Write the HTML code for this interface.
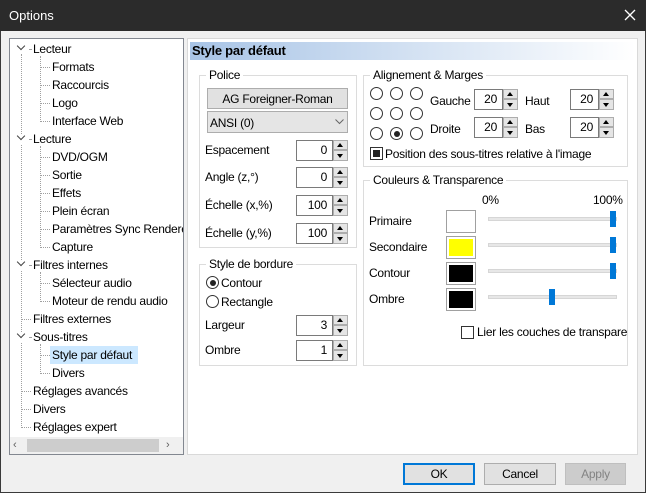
<!DOCTYPE html>
<html><head><meta charset="utf-8"><style>
*{box-sizing:border-box;margin:0;padding:0}
body{width:646px;height:493px;background:#f0f0f0;font-family:"Liberation Sans",sans-serif;font-size:12px;letter-spacing:-0.25px;color:#000;position:relative;overflow:hidden}
.a{position:absolute}
.t{position:absolute;white-space:nowrap;line-height:16px;height:16px}
.grp{position:absolute;border:1px solid #dcdcdc}
.gl{position:absolute;top:-9px;left:6px;background:#fff;padding:0 3px;line-height:16px;white-space:nowrap}
.spin{position:absolute;width:52px;height:21px}
.spin .b{position:absolute;left:0;top:0;width:37px;height:21px;border:1px solid #7a7a7a;background:#fff;text-align:right;padding-right:5px;line-height:19px}
.spin .u,.spin .d{position:absolute;left:37px;width:15px;height:10px;background:#e5e5e5;border:1px solid #adadad}
.spin .u{top:0}.spin .d{top:10px;height:11px}
.spin .u:after{content:"";position:absolute;left:3px;top:2px;border-left:3.5px solid transparent;border-right:3.5px solid transparent;border-bottom:4px solid #000}
.spin .d:after{content:"";position:absolute;left:3px;top:3px;border-left:3.5px solid transparent;border-right:3.5px solid transparent;border-top:4px solid #000}
.rad{position:absolute;width:13px;height:13px;border:1px solid #333;border-radius:50%;background:#fff}
.rad.on:after{content:"";position:absolute;left:2.5px;top:2.5px;width:6px;height:6px;border-radius:50%;background:#222}
.hl{position:absolute;border-top:1px dotted #a0a0a0;height:0}
.vl{position:absolute;border-left:1px dotted #a0a0a0;width:0}
.chev{position:absolute;width:6px;height:6px;border-right:1.5px solid #444;border-bottom:1.5px solid #444;transform:rotate(45deg)}
.sw{position:absolute;width:30px;height:23px;border:1px solid #a0a0a0;padding:2px}
.sw i{display:block;width:100%;height:100%}
.tr{position:absolute;left:488px;width:129px;height:4px;background:#e7e7e7;border:1px solid #d6d6d6}
.th{position:absolute;width:6px;height:16px;background:#0078d7}
.btn{position:absolute;height:22px;border:1px solid #adadad;background:#e1e1e1;text-align:center;line-height:20px}
</style></head><body>
<div class="a" style="left:0;top:0;width:646px;height:31px;background:#2b2b2b"></div>
<div class="t" style="left:9px;top:8px;color:#fff;font-size:13px;letter-spacing:0">Options</div>
<svg class="a" style="left:624px;top:9px" width="12" height="12"><path d="M1 1L11 11M11 1L1 11" stroke="#fff" stroke-width="1.3"/></svg>
<div class="a" style="left:0;top:31px;width:1px;height:462px;background:#3a3a3a"></div>
<div class="a" style="right:0;top:31px;width:1px;height:462px;background:#3a3a3a"></div>
<div class="a" style="left:0;bottom:0;width:646px;height:1px;background:#3a3a3a"></div>

<!-- tree -->
<div class="a" style="left:9px;top:38px;width:175px;height:417px;background:#fff;border:1px solid #828790"></div>
<div class="vl" style="left:21px;top:54px;height:374px"></div>
<div class="vl" style="left:40px;top:56px;height:66px"></div>
<div class="vl" style="left:40px;top:146px;height:102px"></div>
<div class="vl" style="left:40px;top:272px;height:30px"></div>
<div class="vl" style="left:40px;top:344px;height:30px"></div>
<div class="a" style="left:16px;top:44px;width:12px;height:10px;background:#fff"></div>
<div class="chev" style="left:18px;top:43px"></div>
<div class="a" style="left:16px;top:134px;width:12px;height:10px;background:#fff"></div>
<div class="chev" style="left:18px;top:133px"></div>
<div class="a" style="left:16px;top:260px;width:12px;height:10px;background:#fff"></div>
<div class="chev" style="left:18px;top:259px"></div>
<div class="a" style="left:16px;top:332px;width:12px;height:10px;background:#fff"></div>
<div class="chev" style="left:18px;top:331px"></div>
<div class="hl" style="left:29px;top:49px;width:2px"></div>
<div class="hl" style="left:29px;top:139px;width:2px"></div>
<div class="hl" style="left:29px;top:265px;width:2px"></div>
<div class="hl" style="left:29px;top:337px;width:2px"></div>
<div class="hl" style="left:22px;top:319px;width:9px"></div>
<div class="hl" style="left:22px;top:391px;width:9px"></div>
<div class="hl" style="left:22px;top:409px;width:9px"></div>
<div class="hl" style="left:22px;top:427px;width:9px"></div>
<div class="hl" style="left:41px;top:67px;width:9px"></div>
<div class="hl" style="left:41px;top:85px;width:9px"></div>
<div class="hl" style="left:41px;top:103px;width:9px"></div>
<div class="hl" style="left:41px;top:121px;width:9px"></div>
<div class="hl" style="left:41px;top:157px;width:9px"></div>
<div class="hl" style="left:41px;top:175px;width:9px"></div>
<div class="hl" style="left:41px;top:193px;width:9px"></div>
<div class="hl" style="left:41px;top:211px;width:9px"></div>
<div class="hl" style="left:41px;top:229px;width:9px"></div>
<div class="hl" style="left:41px;top:247px;width:9px"></div>
<div class="hl" style="left:41px;top:283px;width:9px"></div>
<div class="hl" style="left:41px;top:301px;width:9px"></div>
<div class="hl" style="left:41px;top:355px;width:9px"></div>
<div class="hl" style="left:41px;top:373px;width:9px"></div>
<div class="a" style="left:50px;top:346px;width:88px;height:18px;background:#cce8ff"></div>
<div class="t" style="left:33px;top:41px">Lecteur</div>
<div class="t" style="left:52px;top:59px">Formats</div>
<div class="t" style="left:52px;top:77px">Raccourcis</div>
<div class="t" style="left:52px;top:95px">Logo</div>
<div class="t" style="left:52px;top:113px">Interface Web</div>
<div class="t" style="left:33px;top:131px">Lecture</div>
<div class="t" style="left:52px;top:149px">DVD/OGM</div>
<div class="t" style="left:52px;top:167px">Sortie</div>
<div class="t" style="left:52px;top:185px">Effets</div>
<div class="t" style="left:52px;top:203px">Plein écran</div>
<div class="a" style="left:52px;top:221px;width:131px;overflow:hidden"><div class="t" style="position:static">Paramètres Sync Renderer</div></div>
<div class="t" style="left:52px;top:239px">Capture</div>
<div class="t" style="left:33px;top:257px">Filtres internes</div>
<div class="t" style="left:52px;top:275px">Sélecteur audio</div>
<div class="t" style="left:52px;top:293px">Moteur de rendu audio</div>
<div class="t" style="left:33px;top:311px">Filtres externes</div>
<div class="t" style="left:33px;top:329px">Sous-titres</div>
<div class="t" style="left:52px;top:347px">Style par défaut</div>
<div class="t" style="left:52px;top:365px">Divers</div>
<div class="t" style="left:33px;top:383px">Réglages avancés</div>
<div class="t" style="left:33px;top:401px">Divers</div>
<div class="t" style="left:33px;top:419px">Réglages expert</div>
<div class="a" style="left:10px;top:437px;width:173px;height:17px;background:#f0f0f0"></div>
<div class="a" style="left:27px;top:439px;width:132px;height:13px;background:#cdcdcd"></div>
<div class="t" style="left:13px;top:437px;color:#606060;font-size:11px">&lsaquo;</div>
<div class="t" style="left:166px;top:437px;color:#606060;font-size:11px">&rsaquo;</div>

<!-- right panel -->
<div class="a" style="left:187px;top:38px;width:451px;height:417px;background:#fff;border:1px solid #d9d9d9"></div>
<div class="a" style="left:190px;top:42px;width:446px;height:18px;background:linear-gradient(to right,#a8c4e6,#ffffff)"></div>
<div class="t" style="left:192px;top:43px;font-weight:bold;font-size:13px">Style par défaut</div>

<!-- Police -->
<div class="grp" style="left:199px;top:75px;width:158px;height:173px"><div class="gl">Police</div></div>
<div class="btn" style="left:207px;top:88px;width:141px;height:21px;background:#e1e1e1">AG Foreigner-Roman</div>
<div class="a" style="left:207px;top:111px;width:141px;height:22px;border:1px solid #adadad;background:#e5e5e5"></div>
<div class="t" style="left:210px;top:115px">ANSI (0)</div>
<svg class="a" style="left:335px;top:119px" width="9" height="6"><path d="M0.5 0.5L4.5 4.5L8.5 0.5" stroke="#666" fill="none"/></svg>
<div class="t" style="left:205px;top:142px">Espacement</div>
<div class="spin" style="left:296px;top:140px"><div class="b">0</div><div class="u"></div><div class="d"></div></div>
<div class="t" style="left:205px;top:169px">Angle (z,°)</div>
<div class="spin" style="left:296px;top:167px"><div class="b">0</div><div class="u"></div><div class="d"></div></div>
<div class="t" style="left:205px;top:197px">Échelle (x,%)</div>
<div class="spin" style="left:296px;top:195px"><div class="b">100</div><div class="u"></div><div class="d"></div></div>
<div class="t" style="left:205px;top:225px">Échelle (y,%)</div>
<div class="spin" style="left:296px;top:223px"><div class="b">100</div><div class="u"></div><div class="d"></div></div>

<!-- Style de bordure -->
<div class="grp" style="left:199px;top:264px;width:158px;height:102px"><div class="gl">Style de bordure</div></div>
<div class="rad on" style="left:206px;top:276px"></div><div class="t" style="left:221px;top:275px">Contour</div>
<div class="rad" style="left:206px;top:295px"></div><div class="t" style="left:221px;top:294px">Rectangle</div>
<div class="t" style="left:205px;top:317px">Largeur</div>
<div class="spin" style="left:296px;top:315px"><div class="b">3</div><div class="u"></div><div class="d"></div></div>
<div class="t" style="left:205px;top:342px">Ombre</div>
<div class="spin" style="left:296px;top:340px"><div class="b">1</div><div class="u"></div><div class="d"></div></div>

<!-- Alignement -->
<div class="grp" style="left:363px;top:75px;width:265px;height:92px"><div class="gl">Alignement &amp; Marges</div></div>
<div class="rad" style="left:370px;top:87px"></div><div class="rad" style="left:390px;top:87px"></div><div class="rad" style="left:410px;top:87px"></div>
<div class="rad" style="left:370px;top:107px"></div><div class="rad" style="left:390px;top:107px"></div><div class="rad" style="left:410px;top:107px"></div>
<div class="rad" style="left:370px;top:127px"></div><div class="rad on" style="left:390px;top:127px"></div><div class="rad" style="left:410px;top:127px"></div>
<div class="t" style="left:430px;top:93px">Gauche</div>
<div class="spin" style="left:474px;top:89px;width:44px"><div class="b" style="width:29px">20</div><div class="u" style="left:29px"></div><div class="d" style="left:29px"></div></div>
<div class="t" style="left:525px;top:93px">Haut</div>
<div class="spin" style="left:570px;top:89px;width:44px"><div class="b" style="width:29px">20</div><div class="u" style="left:29px"></div><div class="d" style="left:29px"></div></div>
<div class="t" style="left:430px;top:121px">Droite</div>
<div class="spin" style="left:474px;top:117px;width:44px"><div class="b" style="width:29px">20</div><div class="u" style="left:29px"></div><div class="d" style="left:29px"></div></div>
<div class="t" style="left:525px;top:121px">Bas</div>
<div class="spin" style="left:570px;top:117px;width:44px"><div class="b" style="width:29px">20</div><div class="u" style="left:29px"></div><div class="d" style="left:29px"></div></div>
<div class="a" style="left:370px;top:147px;width:13px;height:13px;border:1px solid #333;background:#fff"><div class="a" style="left:2px;top:2px;width:7px;height:7px;background:#222"></div></div>
<div class="t" style="left:385px;top:146px">Position des sous-titres relative à l'image</div>

<!-- Couleurs -->
<div class="grp" style="left:363px;top:180px;width:265px;height:186px"><div class="gl">Couleurs &amp; Transparence</div></div>
<div class="t" style="left:482px;top:192px">0%</div>
<div class="t" style="left:593px;top:192px">100%</div>
<div class="t" style="left:369px;top:213px">Primaire</div>
<div class="t" style="left:369px;top:239px">Secondaire</div>
<div class="t" style="left:369px;top:265px">Contour</div>
<div class="t" style="left:369px;top:291px">Ombre</div>
<div class="sw" style="left:446px;top:210px"><i style="background:#fff"></i></div>
<div class="sw" style="left:446px;top:236px"><i style="background:#ffff00"></i></div>
<div class="sw" style="left:446px;top:262px"><i style="background:#000"></i></div>
<div class="sw" style="left:446px;top:288px"><i style="background:#000"></i></div>
<div class="tr" style="top:217px"></div><div class="th" style="left:610px;top:211px"></div>
<div class="tr" style="top:243px"></div><div class="th" style="left:610px;top:237px"></div>
<div class="tr" style="top:269px"></div><div class="th" style="left:610px;top:263px"></div>
<div class="tr" style="top:295px"></div><div class="th" style="left:549px;top:289px"></div>
<div class="a" style="left:461px;top:326px;width:13px;height:13px;border:1px solid #333;background:#fff"></div>
<div class="a" style="left:477px;top:324px;width:150px;overflow:hidden"><div class="t" style="position:static">Lier les couches de transparence</div></div>

<!-- buttons -->
<div class="btn" style="left:403px;top:463px;width:72px;border:2px solid #0078d7;line-height:18px">OK</div>
<div class="btn" style="left:484px;top:463px;width:72px">Cancel</div>
<div class="btn" style="left:565px;top:463px;width:61px;background:#cccccc;border-color:#bfbfbf;color:#838383">Apply</div>
</body></html>
